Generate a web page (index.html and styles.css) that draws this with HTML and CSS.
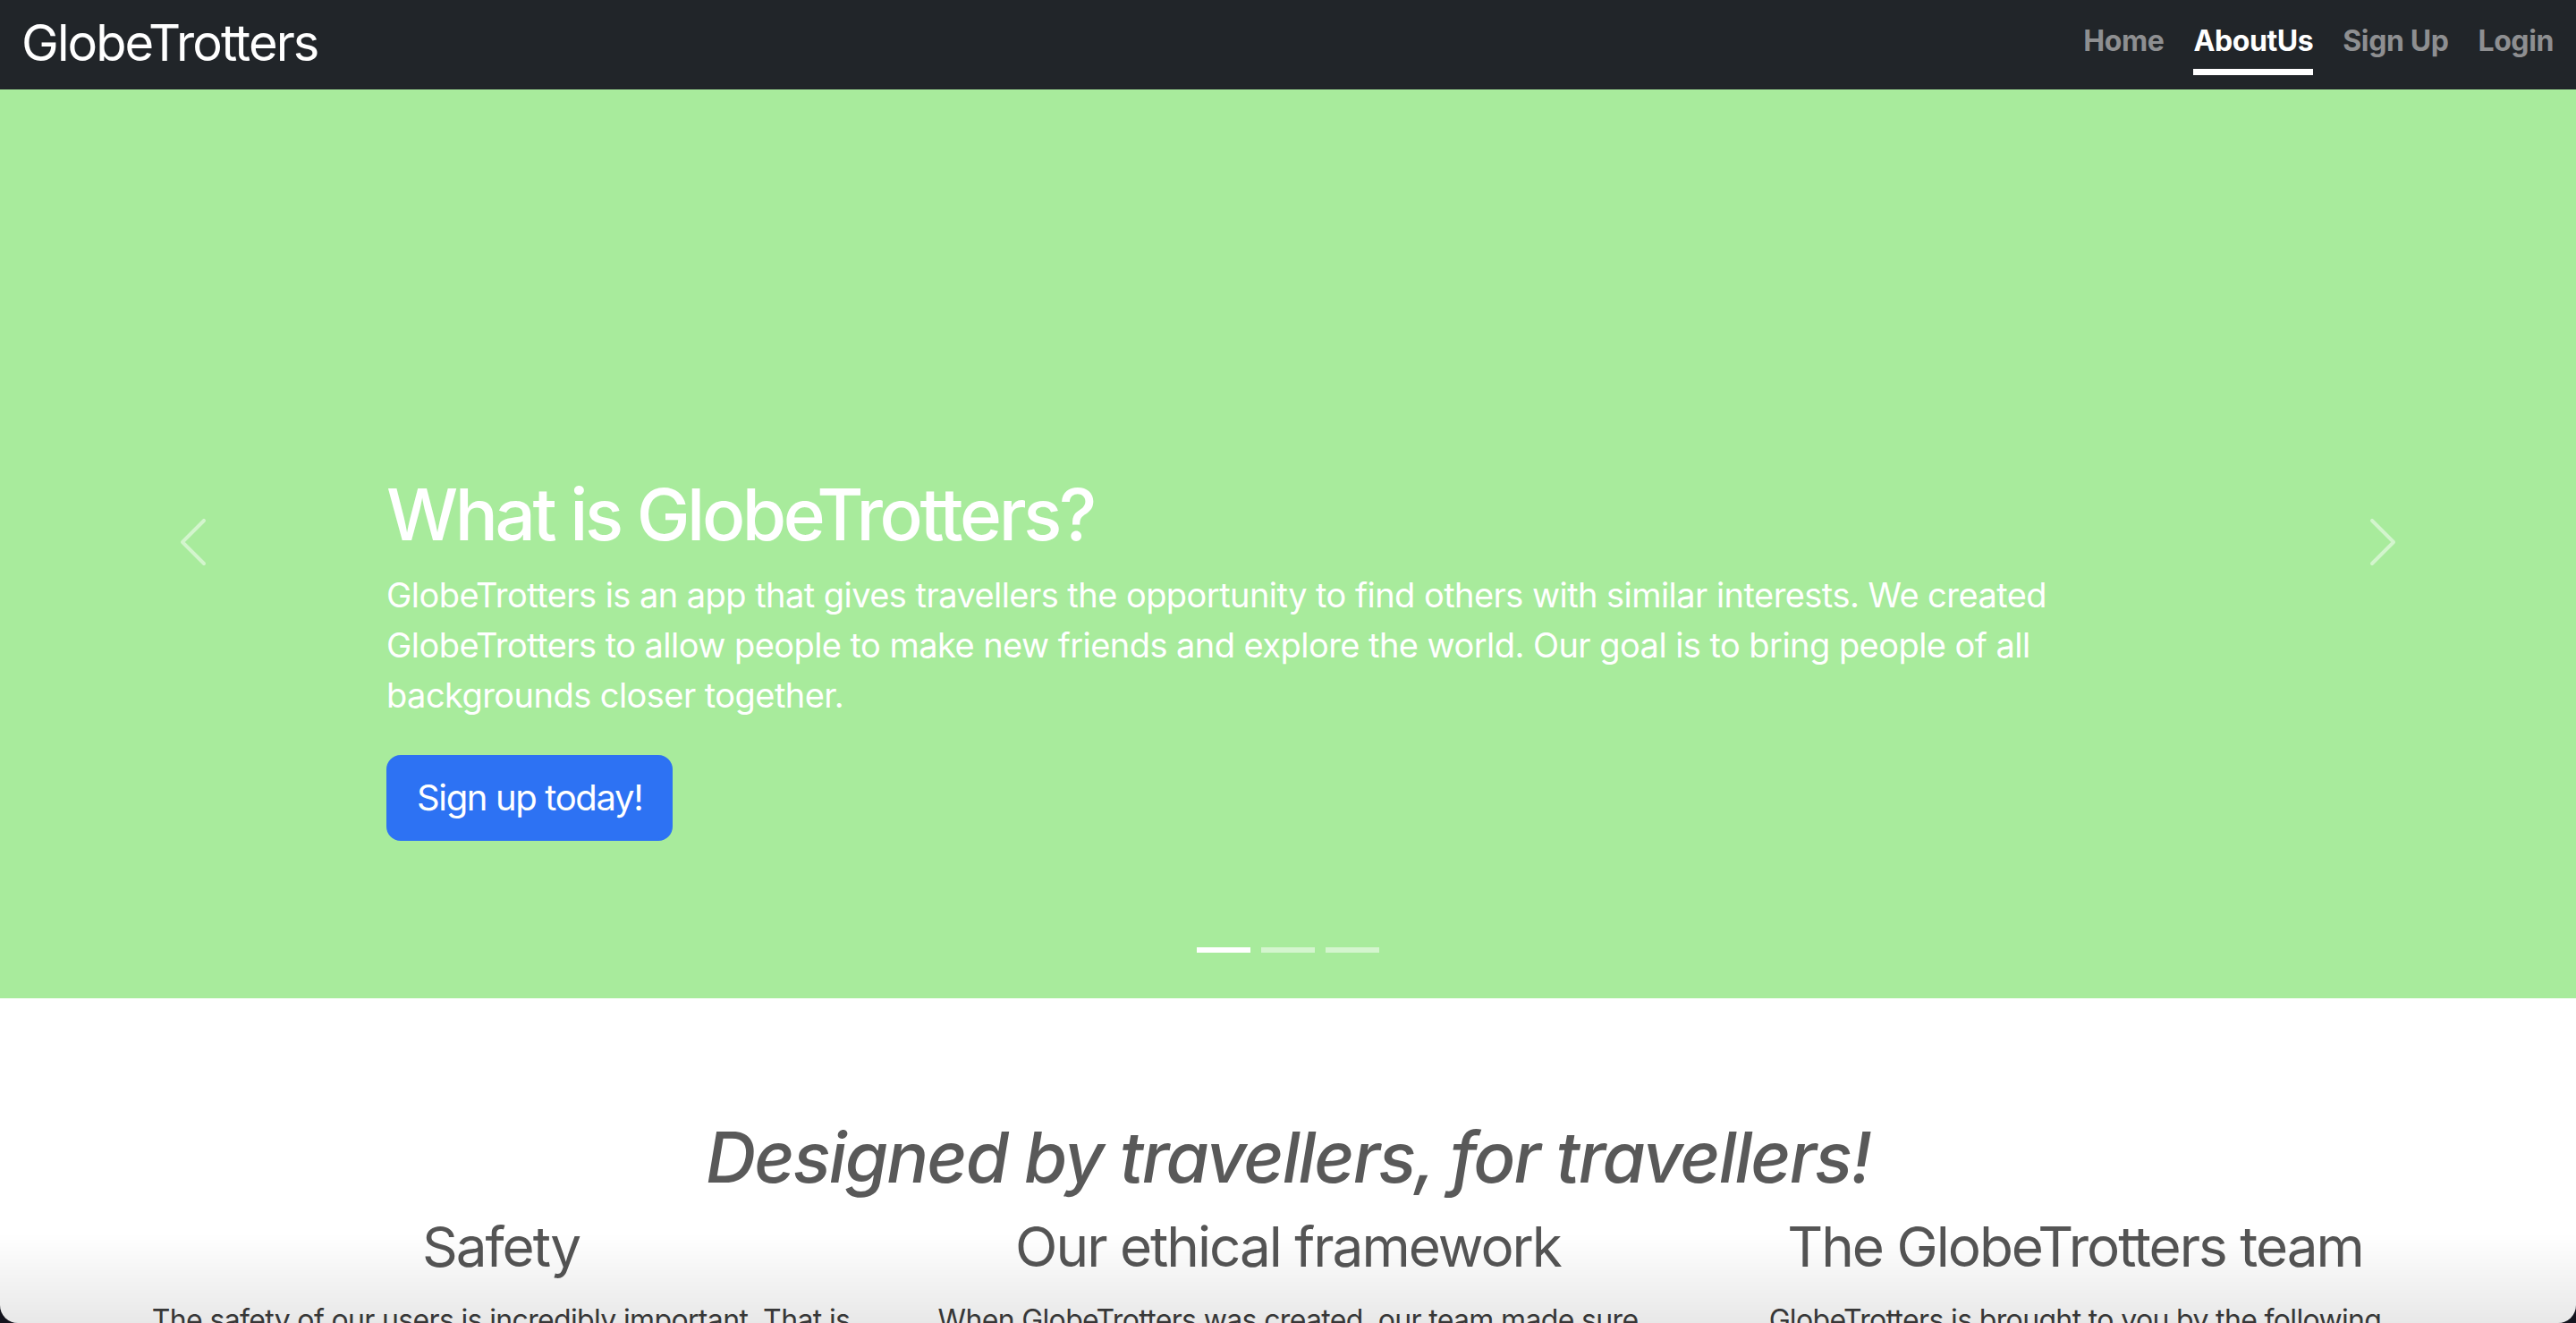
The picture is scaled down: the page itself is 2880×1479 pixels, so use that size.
FILE: index.html
```html
<!DOCTYPE html>
<html lang="en">
<head>
<meta charset="utf-8">
<title>GlobeTrotters - About Us</title>
<link rel="stylesheet" href="styles.css">
</head>
<body>
<nav class="navbar">
  <a class="brand" href="#">GlobeTrotters</a>
  <ul class="nav">
    <li><a class="nav-link" href="#">Home</a></li>
    <li><a class="nav-link active" href="#">AboutUs</a></li>
    <li><a class="nav-link" href="#">Sign Up</a></li>
    <li><a class="nav-link" href="#">Login</a></li>
  </ul>
</nav>

<section class="hero">
  <button class="ctrl ctrl-prev" aria-label="Previous">
    <svg viewBox="0 0 16 16" width="64" height="64"><path fill="#fff" d="M11.354 1.646a.5.5 0 0 1 0 .708L5.707 8l5.647 5.646a.5.5 0 0 1-.708.708l-6-6a.5.5 0 0 1 0-.708l6-6a.5.5 0 0 1 .708 0z"/></svg>
  </button>
  <div class="caption">
    <h1 class="caption-title">What is GlobeTrotters?</h1>
    <p class="lead">GlobeTrotters is an app that gives travellers the opportunity to find others with similar interests. We created GlobeTrotters to allow people to make new friends and explore the world. Our goal is to bring people of all backgrounds closer together.</p>
    <a class="btn-primary" href="#">Sign up today!</a>
  </div>
  <button class="ctrl ctrl-next" aria-label="Next">
    <svg viewBox="0 0 16 16" width="64" height="64"><path fill="#fff" d="M4.646 1.646a.5.5 0 0 1 .708 0l6 6a.5.5 0 0 1 0 .708l-6 6a.5.5 0 0 1-.708-.708L10.293 8 4.646 2.354a.5.5 0 0 1 0-.708z"/></svg>
  </button>
  <div class="indicators">
    <span class="dot active"></span>
    <span class="dot"></span>
    <span class="dot"></span>
  </div>
</section>

<section class="features">
  <h2 class="tagline">Designed by travellers, for travellers!</h2>
  <div class="cols">
    <div class="col">
      <h2 class="col-title">Safety</h2>
      <p class="col-text">The safety of our users is incredibly important. That is why every profile is verified before it can connect with other travellers.</p>
    </div>
    <div class="col">
      <h2 class="col-title">Our ethical framework</h2>
      <p class="col-text">When GlobeTrotters was created, our team made sure that respect, inclusion and honesty were at the heart of everything we do.</p>
    </div>
    <div class="col">
      <h2 class="col-title">The GlobeTrotters team</h2>
      <p class="col-text">GlobeTrotters is brought to you by the following individuals, a small group of passionate travellers.</p>
    </div>
  </div>
</section>

<div class="frame"></div>
</body>
</html>
```

FILE: styles.css
```css
* { box-sizing: border-box; }

html, body {
  margin: 0;
  padding: 0;
}

body {
  font-family: Inter, "Liberation Sans", sans-serif;
  background: #fff;
  color: #212529;
}

/* ---------- navbar ---------- */
.navbar {
  height: 100px;
  background: #212529;
  display: flex;
  justify-content: space-between;
  align-items: flex-start;
  padding: 0 25px 0 24px;
}

.brand {
  margin-top: 15px;
  font-size: 56px;
  line-height: 67px;
  font-weight: 400;
  letter-spacing: -1.9px;
  color: #fff;
  text-decoration: none;
}

.nav {
  list-style: none;
  margin: 0;
  padding: 0;
  display: flex;
  gap: 33px;
}

.nav-link {
  display: block;
  padding-top: 26px;
  padding-bottom: 11px;
  border-bottom: 7px solid transparent;
  font-size: 32px;
  line-height: 40px;
  font-weight: 700;
  letter-spacing: -0.4px;
  color: #8e8f91;
  text-decoration: none;
}

.nav-link.active {
  color: #fff;
  border-bottom-color: #fff;
}

/* ---------- hero carousel ---------- */
.hero {
  height: 1016px;
  background: #a8eb9c;
  display: grid;
  grid-template-columns: 432px 1fr 432px;
  grid-template-rows: 1fr auto;
}

.ctrl {
  grid-row: 1 / 3;
  align-self: center;
  justify-self: center;
  width: 64px;
  height: 64px;
  margin-bottom: 4px;
  padding: 0;
  border: 0;
  background: none;
  opacity: 0.5;
}

.ctrl svg { display: block; }

.ctrl-prev { grid-column: 1; }
.ctrl-next { grid-column: 3; }

.caption {
  grid-column: 2;
  grid-row: 1;
  padding-top: 427px;
  color: #fff;
}

.caption-title {
  margin: 0 0 14px;
  font-size: 80px;
  line-height: 96px;
  font-weight: 500;
  letter-spacing: -3.4px;
}

.lead {
  margin: 0 0 39px;
  font-size: 38px;
  line-height: 56px;
  font-weight: 400;
  letter-spacing: -0.55px;
}

.btn-primary {
  display: inline-block;
  padding: 16px 32px;
  border: 2px solid #2d72f3;
  border-radius: 16px;
  background: #2d72f3;
  color: #fff;
  font-size: 40px;
  line-height: 60px;
  font-weight: 400;
  letter-spacing: -1.35px;
  text-decoration: none;
}

.indicators {
  grid-column: 2;
  grid-row: 2;
  display: flex;
  justify-content: center;
  gap: 12px;
  padding: 20px 0 51px;
}

.dot {
  width: 60px;
  height: 6px;
  background: #fff;
  opacity: 0.5;
}

.dot.active { opacity: 1; }

/* ---------- features ---------- */
.features {
  padding: 131px 120px 0;
  text-align: center;
}

.tagline {
  margin: 0 0 16px;
  font-size: 78px;
  line-height: 94px;
  font-style: italic;
  font-weight: 500;
  letter-spacing: -1.85px;
  color: #595959;
}

.cols {
  display: grid;
  grid-template-columns: repeat(3, 1fr);
}

.col {
  padding: 0 24px;
}

.col-title {
  margin: 0 0 21px;
  font-size: 62px;
  line-height: 74px;
  font-weight: 400;
  letter-spacing: -2px;
  color: #555;
}

.col-text {
  margin: 0;
  font-size: 32px;
  line-height: 48px;
  letter-spacing: -0.65px;
  color: #3d3d3d;
}

/* ---------- window frame overlay ---------- */
.frame {
  position: fixed;
  inset: 0;
  pointer-events: none;
  border-radius: 0 0 20px 20px;
  box-shadow: 0 0 0 40px #15151f;
  background: linear-gradient(to bottom, rgba(0,0,0,0) 0, rgba(0,0,0,0) calc(100% - 100px), rgba(0,0,0,0.09) 100%);
}
```
